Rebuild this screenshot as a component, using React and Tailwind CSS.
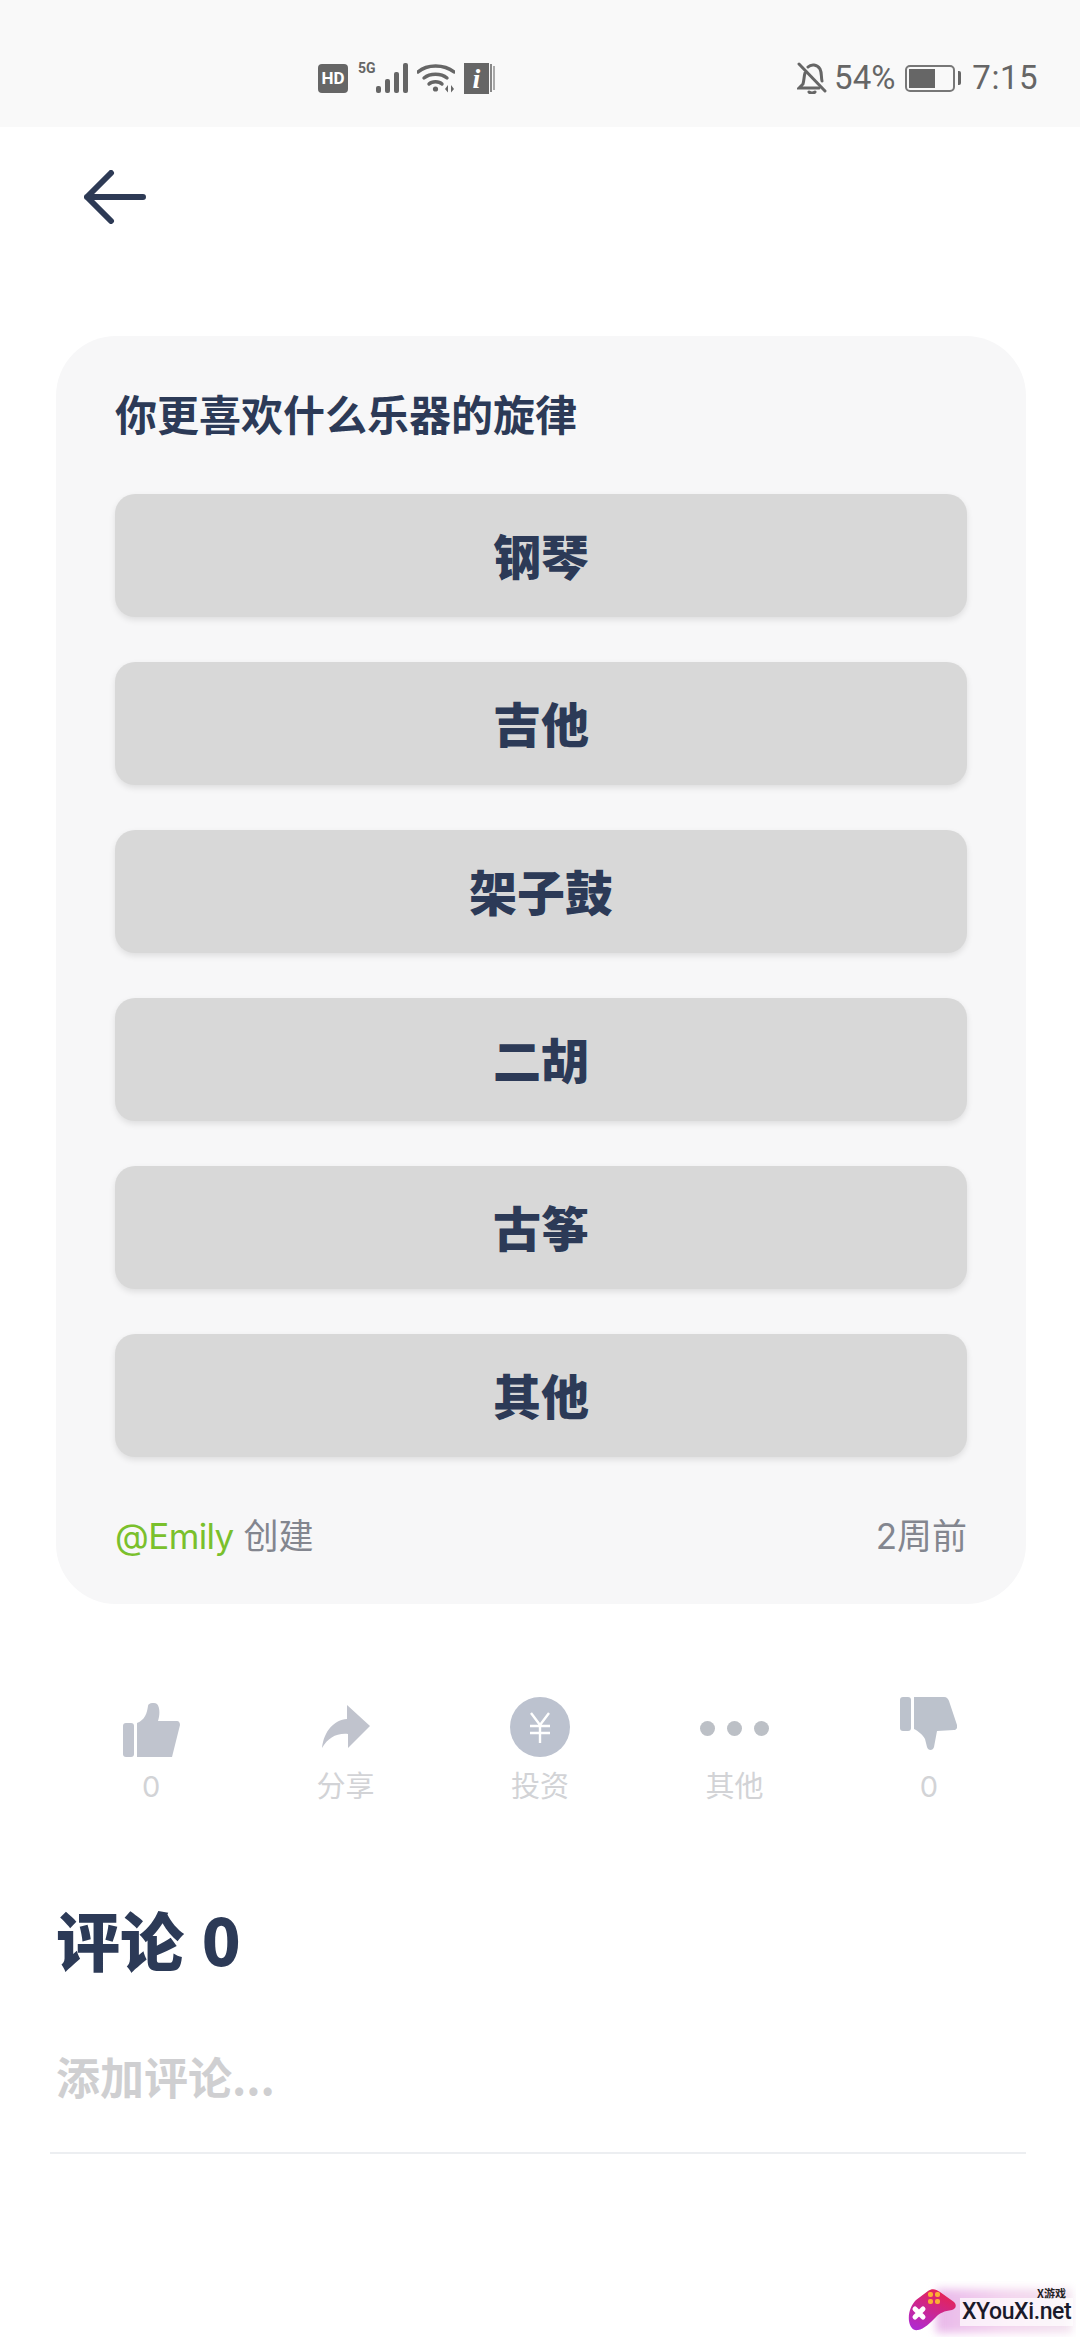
import { useState } from "react";

const options = ["钢琴", "吉他", "架子鼓", "二胡", "古筝", "其他"];

const ThumbUp = () => (
  <svg width="57" height="54" viewBox="0 0 57 54" fill="#c0c4ce">
    <rect x="0" y="20" width="11" height="34" rx="3" />
    <path d="M14 20C22 17 24 10 25 3C25 0 31-1 34 1C37 4 37 12 35 18L54 18C56 18 57 20 57 22L49 54L14 54Z" />
  </svg>
);

const ThumbDown = () => (
  <svg width="57" height="54" viewBox="0 0 57 54" fill="#bcc2cc">
    <rect x="0" y="0" width="11" height="34" rx="3" />
    <path d="M14 0L44 0C47 0 48 2 49 4L57 28C58 31 56 33 54 33L37 34L34 50C33 54 28 54 27 50L25 42C23 38 18 34 14 32Z" />
  </svg>
);

const ShareArrow = () => (
  <svg width="48" height="43" viewBox="0 0 48 43" fill="#c0c3cd">
    <path d="M25 0L48 21L26 43L26 29C14 28 6 33 0 43C2 26 12 15 25 14Z" />
  </svg>
);

const YuanCoin = () => (
  <svg width="60" height="60" viewBox="0 0 60 60">
    <circle cx="30" cy="30" r="30" fill="#bcc2cf" />
    <path d="M21 16L30 28L39 16M20 29L40 29M20 36L40 36M30 28L30 46" fill="none" stroke="#fff" strokeWidth="2.4" />
  </svg>
);

const Dots = () => (
  <div className="flex gap-[12px]">
    <span className="w-[15px] h-[15px] rounded-full bg-[#bcc0c6]" />
    <span className="w-[15px] h-[15px] rounded-full bg-[#bcc0c6]" />
    <span className="w-[15px] h-[15px] rounded-full bg-[#bcc0c6]" />
  </div>
);

const actions = [
  { icon: <ThumbUp />, label: "0", offset: "pt-[6px]" },
  { icon: <ShareArrow />, label: "分享", offset: "pt-[8px]" },
  { icon: <YuanCoin />, label: "投资", offset: "" },
  { icon: <Dots />, label: "其他", offset: "pt-[24px]" },
  { icon: <ThumbDown />, label: "0", offset: "" },
];

const StatusBar = () => (
  <div className="h-[127px] bg-[#f9f9f9] flex items-start justify-between pl-[318px] pr-[42px] pt-[62px] text-[#666] font-['Roboto',sans-serif]">
    <div className="flex items-center h-[32px]">
      <div className="w-[30px] h-[29px] rounded-[4px] bg-[#666] text-white text-[17px] leading-[29px] font-bold text-center">HD</div>
      <div className="w-[50px] ml-[10px] h-[32px] relative">
        <span className="absolute left-0 top-[-3px] text-[14px] leading-[18px] font-bold">5G</span>
        <svg width="50" height="32" viewBox="0 0 50 32" fill="#666">
          <rect x="18" y="24" width="5" height="7" rx="2" />
          <rect x="27" y="17" width="5" height="14" rx="2" />
          <rect x="36" y="10" width="5" height="21" rx="2" />
          <rect x="45" y="1" width="5" height="30" rx="2" />
        </svg>
      </div>
      <svg className="ml-[9px]" width="38" height="30" viewBox="0 0 38 30" fill="none" stroke="#666" strokeWidth="3.4">
        <path d="M1 9C10 1 27 1 37 9" strokeLinecap="round" />
        <path d="M7 15C13 10 24 10 30 15" strokeLinecap="round" />
        <path d="M12 21C15 18 22 18 25 21" strokeLinecap="round" />
        <circle cx="18.5" cy="26" r="2.6" fill="#666" stroke="none" />
        <path d="M28 26L31 22L31 29.5ZM34 22L37 26L34 29.5Z" fill="#666" stroke="none" />
      </svg>
      <div className="ml-[9px] flex items-center">
        <div className="w-[25px] h-[31px] bg-[#666] text-white text-[28px] leading-[31px] font-bold italic text-center font-['Liberation_Serif',serif]">i</div>
        <div className="w-[2px] h-[28px] bg-[#888] ml-[1px]" />
        <div className="w-[2px] h-[24px] bg-[#aaa] ml-[1px]" />
      </div>
    </div>
    <div className="flex items-center h-[32px] text-[33px]">
      <svg width="30" height="32" viewBox="0 0 30 32" fill="none" stroke="#666" strokeWidth="3" strokeLinecap="round">
        <path d="M2 2L28 29" />
        <path d="M8 11C7 14 7 19 6 22L2 26L22 26M11 5C14 2 20 2 23 7C25 11 24 15 25 19" />
        <path d="M12 30C14 31.5 16 31.5 18 30" />
      </svg>
      <span className="ml-[7px] leading-[32px]">54%</span>
      <div className="ml-[10px] flex items-center">
        <div className="w-[50px] h-[27px] rounded-[5px] border-2 border-[#777] p-[2px]">
          <div className="w-[26px] h-full bg-[#666]" />
        </div>
        <div className="w-[3px] h-[14px] rounded-r-[2px] bg-[#666] ml-[3px]" />
      </div>
      <span className="ml-[11px] leading-[32px] tracking-[0.5px]">7:15</span>
    </div>
  </div>
);

const Watermark = () => (
  <div className="absolute right-[4px] bottom-[3px] w-[168px] h-[56px] overflow-hidden">
    <div className="absolute left-[28px] right-[4px] top-[8px] bottom-[4px] bg-gradient-to-r from-[#e9b8ea] via-[#f3d4ee] to-[#f2e3ef] blur-[4px]" />
    <svg className="absolute left-0 top-[8px]" width="50" height="44" viewBox="0 0 50 44">
      <defs>
        <linearGradient id="padFill" x1="0.7" y1="0" x2="0.2" y2="1">
          <stop offset="0" stopColor="#e8234f" />
          <stop offset="1" stopColor="#b02ad0" />
        </linearGradient>
      </defs>
      <path d="M20 2C24-1 28 0 32 3L46 13C49 16 48 20 44 21C36 22 32 24 28 28C22 34 16 40 10 41C5 42 2 38 1 32C0 24 3 16 8 11Z" fill="url(#padFill)" />
      <rect x="20" y="3" width="5" height="5" rx="2" fill="#fbb034" />
      <rect x="27" y="3" width="5" height="5" rx="2" fill="#fbb034" />
      <rect x="20" y="10" width="5" height="5" rx="2" fill="#fbb034" />
      <rect x="27" y="10" width="5" height="5" rx="2" fill="#fbb034" />
      <path d="M7 20L15 28M15 20L7 28" stroke="#fff" strokeWidth="5" strokeLinecap="round" />
    </svg>
    <div className="absolute right-[10px] top-[5px] text-[11px] leading-[14px] font-bold text-[#222] font-['Noto_Sans_CJK_SC',sans-serif]">X游戏</div>
    <div className="absolute left-[52px] top-[17px] px-[2px] bg-white/70 text-[23px] leading-[28px] font-medium text-[#1a1a2a] tracking-[-0.4px] font-['Roboto',sans-serif]">XYouXi.net</div>
  </div>
);

export default function App() {
  const [comment, setComment] = useState("");

  return (
    <div className="relative w-[1080px] h-[2340px] overflow-hidden bg-white text-[#2c3a57] font-['Inter','Noto_Sans_CJK_SC',sans-serif]">
      <StatusBar />

      <div className="h-[209px] pl-[84px] pt-[43px]">
        <svg width="62" height="54" viewBox="0 0 62 54" fill="none" stroke="#2d3a55" strokeWidth="6" strokeLinecap="round" strokeLinejoin="round">
          <path d="M27 3L3 27L27 51M3 27L59 27" />
        </svg>
      </div>

      <div className="ml-[56px] mr-[54px] h-[1268px] rounded-[60px] bg-[#f7f7f8] pl-[59px] pr-[59px] pt-[50px]">
        <h2 className="h-[54px] text-[42px] leading-[54px] font-bold font-['Noto_Sans_CJK_SC',sans-serif]">你更喜欢什么乐器的旋律</h2>
        <div className="mt-[54px] flex flex-col gap-[45px]">
          {options.map((o) => (
            <button
              key={o}
              className="h-[123px] pb-[4px] rounded-[20px] bg-[#d8d8d8] shadow-[0_3px_6px_rgba(0,0,0,0.1)] text-[48px] font-black font-['Noto_Sans_CJK_SC',sans-serif]"
            >
              {o}
            </button>
          ))}
        </div>
        <div className="mt-[56px] flex justify-between text-[35px] leading-[46px] text-[#83868f]">
          <div>
            <span className="text-[#7ac02c] tracking-[-0.6px]">@Emily</span> 创建
          </div>
          <div>2周前</div>
        </div>
      </div>

      <div className="mt-[93px] mx-[54px] grid grid-cols-5">
        {actions.map((a, i) => (
          <div key={i} className="flex flex-col items-center">
            <div className={`h-[60px] ${a.offset}`}>{a.icon}</div>
            <div className="mt-[10px] text-[29px] leading-[40px] text-[#d2d3d6]">{a.label}</div>
          </div>
        ))}
      </div>

      <div className="ml-[56px] mt-[86px]">
        <h3 className="text-[64px] leading-[90px] font-black [word-spacing:3px] font-['Noto_Sans_CJK_SC',sans-serif]">评论 0</h3>
        <input
          value={comment}
          onChange={(e) => setComment(e.target.value)}
          placeholder="添加评论..."
          className="mt-[58px] -ml-[6px] pl-[6px] block w-[976px] h-[113px] pb-[41px] border-b-[2px] border-[#eceef1] bg-transparent outline-none text-[44px] font-bold placeholder:text-[#cfcfd1] font-['Noto_Sans_CJK_SC',sans-serif]"
        />
      </div>

      <Watermark />
    </div>
  );
}
